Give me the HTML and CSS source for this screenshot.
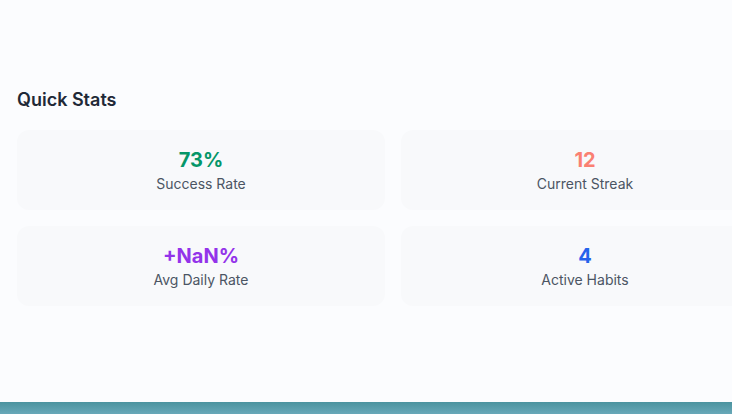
FILE: index.html
```html
<!DOCTYPE html>
<html lang="en">
<head>
<meta charset="utf-8">
<title>Quick Stats</title>
<link rel="stylesheet" href="styles.css">
</head>
<body>
<main class="page">
  <section class="stats">
    <h2 class="stats-title">Quick Stats</h2>
    <div class="stats-grid">
      <div class="stat-card">
        <div class="stat-value green">73%</div>
        <div class="stat-label">Success Rate</div>
      </div>
      <div class="stat-card">
        <div class="stat-value salmon">12</div>
        <div class="stat-label">Current Streak</div>
      </div>
      <div class="stat-card">
        <div class="stat-value purple">+NaN%</div>
        <div class="stat-label">Avg Daily Rate</div>
      </div>
      <div class="stat-card">
        <div class="stat-value blue">4</div>
        <div class="stat-label">Active Habits</div>
      </div>
    </div>
  </section>
</main>
<div class="bottom-band"></div>
</body>
</html>
```
FILE: styles.css
```css
html, body {
  margin: 0;
  padding: 0;
}
body {
  background: #fbfcfe;
  font-family: Inter, "Noto Sans", sans-serif;
  overflow: hidden;
  width: 732px;
  height: 414px;
}
.page {
  height: 402px;
  box-sizing: border-box;
  padding: 86px 0 0 17px;
  overflow: hidden;
}
.stats-title {
  margin: 0 0 16px;
  font-size: 18px;
  line-height: 28px;
  font-weight: 600;
  color: #1f2937;
}
.stats-grid {
  display: grid;
  grid-template-columns: 368px 368px;
  gap: 16px;
  width: 752px;
}
.stat-card {
  background: #f8f9fb;
  border-radius: 12px;
  padding: 16px;
  text-align: center;
}
.stat-value {
  font-size: 20px;
  line-height: 28px;
  font-weight: 700;
}
.stat-label {
  font-size: 14px;
  line-height: 20px;
  color: #4b5563;
}
.green { color: #059669; }
.salmon { color: #fa8072; }
.purple { color: #9333ea; }
.blue { color: #2563eb; }
.bottom-band {
  height: 12px;
  background: linear-gradient(180deg, #4b939f 0%, #68a8b8 100%);
}
```
